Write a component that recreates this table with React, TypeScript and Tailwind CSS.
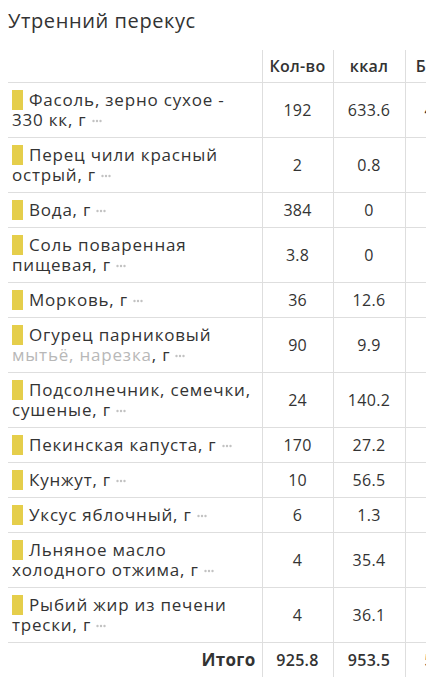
import type { ReactNode } from 'react'

interface Item {
  name: ReactNode
  qty: string
  kcal: string
  protein: string
}

const items: Item[] = [
  { name: 'Фасоль, зерно сухое - 330 кк, г', qty: '192', kcal: '633.6', protein: '44.7' },
  { name: 'Перец чили красный острый, г', qty: '2', kcal: '0.8', protein: '0' },
  { name: 'Вода, г', qty: '384', kcal: '0', protein: '0' },
  { name: 'Соль поваренная пищевая, г', qty: '3.8', kcal: '0', protein: '0' },
  { name: 'Морковь, г', qty: '36', kcal: '12.6', protein: '0.5' },
  {
    name: (
      <>
        Огурец парниковый <span className="text-[#b8b8b8]">мытьё, нарезка</span>, г
      </>
    ),
    qty: '90',
    kcal: '9.9',
    protein: '0.7',
  },
  { name: 'Подсолнечник, семечки, сушеные, г', qty: '24', kcal: '140.2', protein: '5' },
  { name: 'Пекинская капуста, г', qty: '170', kcal: '27.2', protein: '2' },
  { name: 'Кунжут, г', qty: '10', kcal: '56.5', protein: '1.9' },
  { name: 'Уксус яблочный, г', qty: '6', kcal: '1.3', protein: '0' },
  { name: 'Льняное масло холодного отжима, г', qty: '4', kcal: '35.4', protein: '0' },
  { name: 'Рыбий жир из печени трески, г', qty: '4', kcal: '36.1', protein: '0' },
]

const cell = 'border-l border-[#dedede] px-1 py-[7px] text-center align-middle'

function Dots() {
  return (
    <svg width="10" height="4" viewBox="0 0 10 4" className="inline-block align-middle" aria-hidden>
      <circle cx="1.5" cy="2" r="1.2" fill="#c2c2c2" />
      <circle cx="5" cy="2" r="1.2" fill="#c2c2c2" />
      <circle cx="8.5" cy="2" r="1.2" fill="#c2c2c2" />
    </svg>
  )
}

export default function App() {
  return (
    <div className="min-h-[680px] bg-white text-[#333] font-['Open_Sans',sans-serif]">
      <h1 className="px-2 pt-[7px] text-[20px] leading-[28px] tracking-[0.6px] text-[#333]">Утренний перекус</h1>
      <div className="mt-[15px] overflow-hidden pl-2">
        <table className="w-[541px] table-fixed border-collapse text-[16px] leading-[20px]">
          <colgroup>
            <col className="w-[254px]" />
            <col className="w-[71px]" />
            <col className="w-[72px]" />
            <col className="w-[72px]" />
            <col className="w-[72px]" />
          </colgroup>
          <thead>
            <tr className="border-b border-[#dedede]">
              <th className="py-[6px]" />
              <th className="border-l border-[#dedede] py-[6px] text-center font-semibold tracking-[0.3px]">Кол-во</th>
              <th className="border-l border-[#dedede] py-[6px] text-center font-semibold tracking-[0.3px]">ккал</th>
              <th className="border-l border-[#dedede] py-[6px] text-center font-semibold tracking-[0.3px]">Белки</th>
              <th className="border-l border-[#dedede] py-[6px] text-center font-semibold tracking-[0.3px]">Жиры</th>
            </tr>
          </thead>
          <tbody>
            {items.map((item, i) => (
              <tr key={i} className="border-b border-[#dedede]">
                <td className="py-[7px] pl-1 pr-2 text-left align-middle text-[17px] tracking-[0.8px]">
                  <span className="mr-[6px] inline-block h-[20px] w-[11px] bg-[#e5ce4b] align-[-4px]" />
                  {item.name} <Dots />
                </td>
                <td className={`${cell} font-medium tracking-[0.2px]`}>{item.qty}</td>
                <td className={`${cell} tracking-[0.3px]`}>{item.kcal}</td>
                <td className={`${cell} tracking-[0.3px]`}>{item.protein}</td>
                <td className={cell}>0</td>
              </tr>
            ))}
            <tr>
              <td className="py-[7px] pr-[6px] text-right text-[17px] font-bold tracking-[0.3px]">Итого</td>
              <td className={`${cell} font-semibold tracking-[0.3px]`}>925.8</td>
              <td className={`${cell} font-semibold tracking-[0.3px]`}>953.5</td>
              <td className={`${cell} font-semibold tracking-[0.3px]`}>55.2</td>
              <td className={`${cell} font-semibold`}>20.1</td>
            </tr>
          </tbody>
        </table>
      </div>
    </div>
  )
}
